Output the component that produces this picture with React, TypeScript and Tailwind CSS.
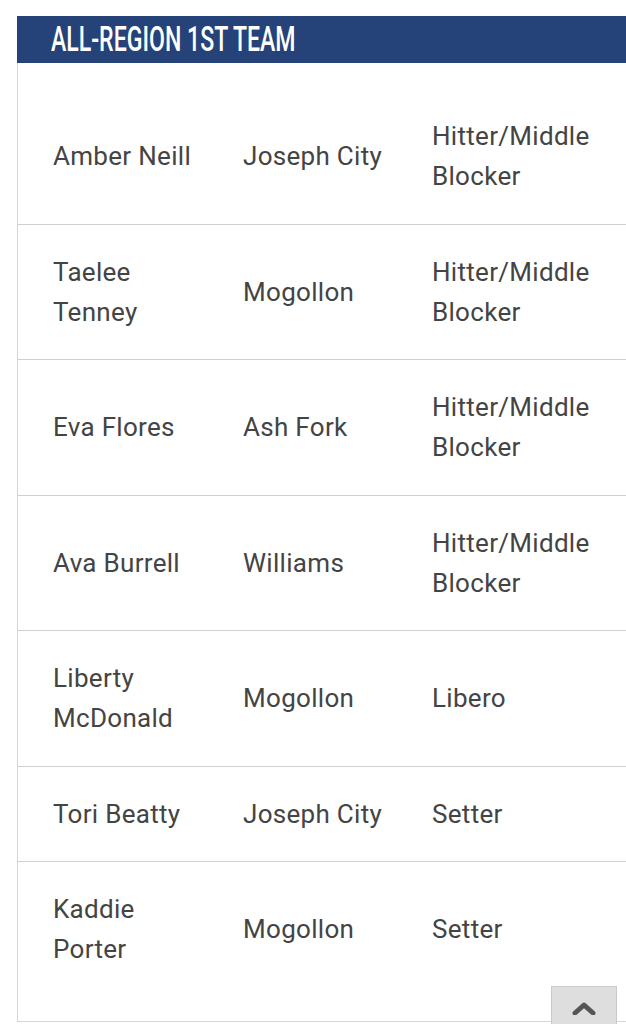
import React from "react";

const rows: [string, string, string][] = [
  ["Amber Neill", "Joseph City", "Hitter/Middle Blocker"],
  ["Taelee Tenney", "Mogollon", "Hitter/Middle Blocker"],
  ["Eva Flores", "Ash Fork", "Hitter/Middle Blocker"],
  ["Ava Burrell", "Williams", "Hitter/Middle Blocker"],
  ["Liberty McDonald", "Mogollon", "Libero"],
  ["Tori Beatty", "Joseph City", "Setter"],
  ["Kaddie Porter", "Mogollon", "Setter"],
];

export default function App() {
  return (
    <div className="relative min-h-[1024px] w-[626px] overflow-hidden bg-white pt-[16px] font-['Roboto',sans-serif]">
      <div className="ml-[17px] flex h-[47px] items-center bg-[#254279] pl-[34px]">
        <span className="inline-block origin-left scale-x-[0.66] whitespace-nowrap text-[35px] font-medium leading-none tracking-[0px] text-white">
          ALL-REGION 1ST TEAM
        </span>
      </div>
      <div className="ml-[17px] border-b border-l border-[#d6d6d6] pb-[24px] pt-[26px]">
        {rows.map((r, i) => (
          <div
            key={i}
            className={`grid grid-cols-[190px_189px_1fr] items-center text-[26px] leading-[40px] tracking-[0.3px] text-[#444444] ${
              i < rows.length - 1 ? "border-b border-[#d0d0d0]" : ""
            }`}
          >
            {r.map((c, j) => (
              <div key={j} className="py-[27.25px] pl-[35px] pr-[10px]">
                {c}
              </div>
            ))}
          </div>
        ))}
      </div>
      <div className="absolute left-[551px] top-[986px] flex h-[44px] w-[66px] items-start justify-center border border-[#c9c9c9] bg-[#dedede] pt-[14px]">
        <svg width="24" height="14" viewBox="0 0 24 14">
          <path d="M3 12 L12 4 L21 12" fill="none" stroke="#555555" strokeWidth="5" strokeLinecap="round" strokeLinejoin="round" />
        </svg>
      </div>
    </div>
  );
}
